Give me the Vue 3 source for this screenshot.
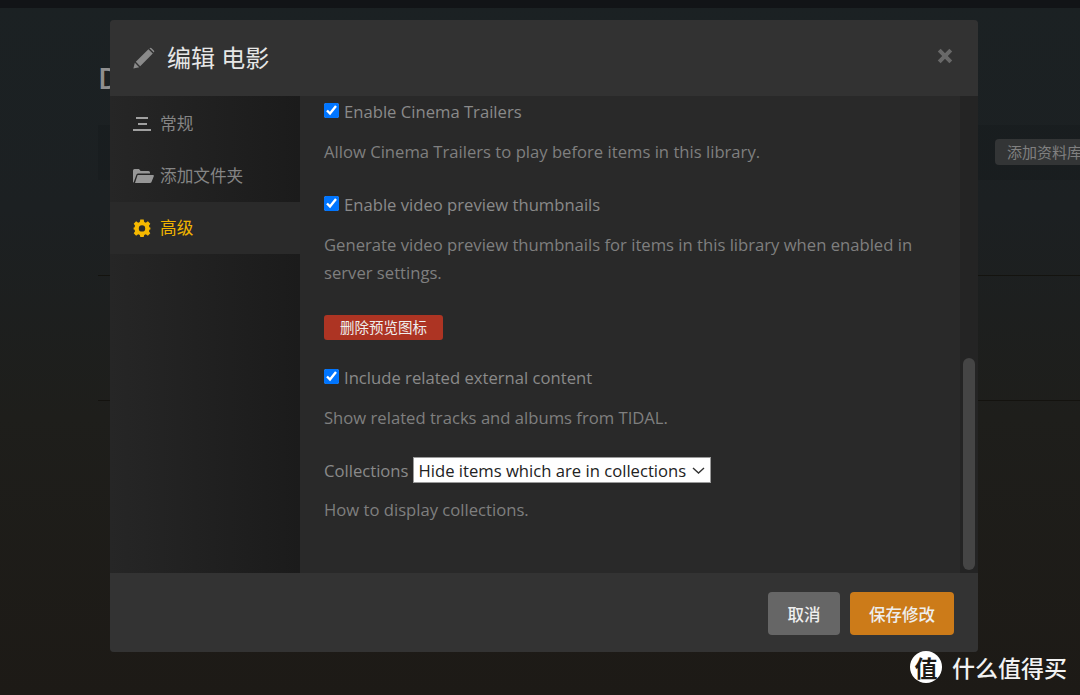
<script setup>
const navItems = [
  { key: 'general', label: '常规', icon: 'lines' },
  { key: 'folders', label: '添加文件夹', icon: 'folder' },
  { key: 'advanced', label: '高级', icon: 'cog', active: true }
]
</script>

<template>
  <div class="page">
    <div class="topbar"></div>
    <div class="page-main">
      <div class="page-title">D</div>
      <div class="page-band">
        <button class="add-lib">添加资料库</button>
      </div>
      <div class="page-row first"></div>
      <div class="page-row"></div>
    </div>

    <div class="dialog">
      <header class="dialog-head">
        <svg class="pencil" viewBox="0 0 22 22" width="22" height="22">
          <path d="M0.4 21.6 L1.8 15.8 L6.2 20.2 Z M2.8 14.8 L15.4 2.2 L19.8 6.6 L7.2 19.2 Z M16.4 1.2 Q17.5 0.2 18.6 1.2 L20.8 3.4 Q21.8 4.5 20.8 5.6 Z" fill="#8a8a8a" />
        </svg>
        <h2 class="dialog-title">编辑 电影</h2>
        <svg class="close" viewBox="0 0 16 16" width="16" height="16">
          <path d="M2.2 2.2 L13.8 13.8 M13.8 2.2 L2.2 13.8" stroke="#686868" stroke-width="4" />
        </svg>
      </header>

      <div class="dialog-body">
        <nav class="side">
          <a v-for="item in navItems" :key="item.key" class="side-item" :class="{ active: item.active }">
            <span class="side-icon">
              <svg v-if="item.icon === 'lines'" viewBox="0 0 18 16" width="18" height="16">
                <path d="M3 1 H15 V3 H3 Z M5 7 H14 V9 H5 Z M0 13 H18 V15 H0 Z" fill="#a0a0a0" />
              </svg>
              <svg v-else-if="item.icon === 'folder'" viewBox="0 0 21 16" width="21" height="16">
                <path d="M0 14 V2.5 Q0 1 1.5 1 H6 L7.6 3 H15.5 Q17 3 17 4.5 V5.5 H5.2 Q4 5.5 3.5 6.6 L0.6 14.6 Q0 14.6 0 14 Z M4.6 7 H20 Q21.2 7 20.8 8.2 L18.4 14.2 Q18 15 17 15 H2 Z" fill="#969696" />
              </svg>
              <svg v-else viewBox="0 0 18 18" width="18" height="18">
                <path fill-rule="evenodd" d="M7.3 0.6 H10.7 L11.2 3 L12.8 3.7 L14.9 2.3 L17.3 4.7 L15.9 6.8 L16.6 8.4 L17.4 8.6 V10.4 L16.6 10.6 L15.9 12.2 L17.3 14.3 L14.9 16.7 L12.8 15.3 L11.2 16 L10.7 18 H7.3 L6.8 16 L5.2 15.3 L3.1 16.7 L0.7 14.3 L2.1 12.2 L1.4 10.6 L0.6 10.4 V8.6 L1.4 8.4 L2.1 6.8 L0.7 4.7 L3.1 2.3 L5.2 3.7 L6.8 3 Z M9 6.2 A3.2 3.2 0 1 0 9 12.6 A3.2 3.2 0 1 0 9 6.2 Z" fill="#f5b800" />
              </svg>
            </span>
            <span class="side-label">{{ item.label }}</span>
          </a>
        </nav>

        <div class="content">
          <label class="check-row">
            <input type="checkbox" checked />
            <span>Enable Cinema Trailers</span>
          </label>
          <p class="hint first">Allow Cinema Trailers to play before items in this library.</p>

          <label class="check-row">
            <input type="checkbox" checked />
            <span>Enable video preview thumbnails</span>
          </label>
          <p class="hint">Generate video preview thumbnails for items in this library when enabled in server settings.</p>

          <button class="danger">删除预览图标</button>

          <label class="check-row">
            <input type="checkbox" checked />
            <span>Include related external content</span>
          </label>
          <p class="hint">Show related tracks and albums from TIDAL.</p>

          <div class="select-row">
            <span>Collections</span>
            <select>
              <option>Hide items which are in collections</option>
            </select>
          </div>
          <p class="hint">How to display collections.</p>
        </div>

        <div class="scroll-track">
          <div class="scroll-thumb"></div>
        </div>
      </div>

      <footer class="dialog-foot">
        <button class="btn cancel">取消</button>
        <button class="btn save">保存修改</button>
      </footer>
    </div>

    <div class="watermark">
      <span class="wm-badge">值</span>
      <span class="wm-text">什么值得买</span>
    </div>
  </div>
</template>

<style>
body {
  margin: 0;
  background: #1d1b17;
}
</style>

<style scoped>
.page {
  position: relative;
  width: 1080px;
  height: 695px;
  overflow: hidden;
  background: linear-gradient(180deg, #1b2123 0%, #1c2022 30%, #1e1e1b 60%, #1d1a16 100%);
  font-family: "Open Sans", "Noto Sans CJK SC", sans-serif;
  font-size: 16.65px;
  color: #8a8a8a;
}

.topbar {
  height: 8px;
  background: #121417;
}

.page-main {
  margin-left: 98px;
}

.page-title {
  height: 117px;
  padding-top: 50px;
  box-sizing: border-box;
  font-size: 29px;
  line-height: 40px;
  font-weight: 600;
  color: #8f8f8f;
}

.page-band {
  height: 55px;
  padding: 14px 0 0 897px;
  box-sizing: border-box;
  background: rgba(0, 0, 0, 0.08);
}

.page-row {
  height: 125px;
  box-sizing: border-box;
  border-bottom: 1px solid #14130f;
}

.page-row.first {
  height: 96px;
}

.add-lib {
  display: block;
  width: 85px;
  height: 26px;
  padding: 0 0 0 12px;
  border: 0;
  border-radius: 4px 0 0 4px;
  background: #333536;
  color: #808080;
  font: 15px/26px "Open Sans", "Noto Sans CJK SC", sans-serif;
  white-space: nowrap;
  overflow: hidden;
  text-align: left;
}

.dialog {
  position: absolute;
  left: 110px;
  top: 20px;
  width: 868px;
  height: 632px;
  display: flex;
  flex-direction: column;
  border-radius: 4px;
  overflow: hidden;
  background: #292929;
}

.dialog-head {
  height: 76px;
  flex: none;
  display: flex;
  align-items: center;
  padding: 0 25px 0 23px;
  background: #323232;
}

.pencil {
  margin-right: 12px;
}

.dialog-title {
  flex: 1;
  margin: 0 0 4px;
  font-size: 24px;
  font-weight: 400;
  color: #e6e6e6;
}

.close {
  margin-bottom: 4px;
}

.dialog-body {
  flex: 1;
  min-height: 0;
  display: flex;
}

.side {
  width: 190px;
  flex: none;
  padding-top: 2px;
  box-sizing: border-box;
  background: linear-gradient(90deg, #262626 0%, #212121 45%, #1b1b1b 100%);
}

.side-item {
  height: 52px;
  display: flex;
  align-items: center;
  padding-left: 23px;
  color: #858585;
}

.side-item.active {
  background: #2a2a2a;
  color: #f0b400;
}

.side-icon {
  width: 27px;
  height: 18px;
  flex: none;
  display: flex;
  align-items: center;
}

.side-label {
  margin-bottom: 2px;
}

.content {
  flex: 1;
  min-width: 0;
  padding: 2px 24px 0;
  line-height: 28px;
  overflow: hidden;
}

.check-row {
  display: flex;
  align-items: center;
  height: 28px;
}

.check-row input {
  width: 15px;
  height: 15px;
  margin: 0 5px 3px 0;
}

.hint {
  margin: 12px 0 24px;
  color: #7f7f7f;
}

.hint.first {
  margin-bottom: 25px;
}

.danger {
  display: block;
  width: 119px;
  height: 25px;
  margin: 28px 0 24px;
  padding: 0;
  border: 0;
  border-radius: 3px;
  background: #ad3423;
  color: #eeeeee;
  font: 14.5px/25px "Open Sans", "Noto Sans CJK SC", sans-serif;
}

.select-row {
  display: flex;
  align-items: center;
  gap: 4px;
  height: 28px;
  margin-top: 25px;
}

.select-row select {
  appearance: none;
  width: 298px;
  height: 26px;
  margin-bottom: 2px;
  padding: 0 0 0 5px;
  border: 1px solid #9a9a9a;
  border-radius: 0;
  background: #fff url("data:image/svg+xml,%3Csvg xmlns='http://www.w3.org/2000/svg' width='13' height='7'%3E%3Cpath d='M1 1 L6.5 6 L12 1' fill='none' stroke='%23333' stroke-width='1.4'/%3E%3C/svg%3E") no-repeat right 5px center;
  color: #222;
  font: 16.65px "Open Sans", sans-serif;
}

.select-row + .hint {
  margin-top: 11px;
}

.scroll-track {
  width: 18px;
  flex: none;
  position: relative;
  background: #242424;
}

.scroll-thumb {
  position: absolute;
  left: 3px;
  top: 262px;
  width: 12px;
  height: 212px;
  border-radius: 6px;
  background: #454545;
}

.dialog-foot {
  height: 79px;
  flex: none;
  display: flex;
  justify-content: flex-end;
  align-items: flex-start;
  gap: 10px;
  padding: 19px 24px 0 0;
  box-sizing: border-box;
  background: #333333;
}

.btn {
  height: 43px;
  padding: 0;
  border: 0;
  border-radius: 4px;
  color: #eeeeee;
  font: 500 16.5px "Open Sans", "Noto Sans CJK SC", sans-serif;
}

.cancel {
  width: 72px;
  background: #666666;
}

.save {
  width: 104px;
  background: #cc7b19;
}

.watermark {
  position: absolute;
  left: 910px;
  top: 651px;
  display: flex;
  align-items: center;
  gap: 10px;
  color: #f2f2f2;
}

.wm-badge {
  width: 32px;
  height: 32px;
  border-radius: 50%;
  background: #fff;
  color: #1d1a16;
  font: 700 23px/32px "Noto Sans CJK SC", sans-serif;
  text-align: center;
}

.wm-text {
  font: 500 23px/32px "Noto Sans CJK SC", sans-serif;
}
</style>
